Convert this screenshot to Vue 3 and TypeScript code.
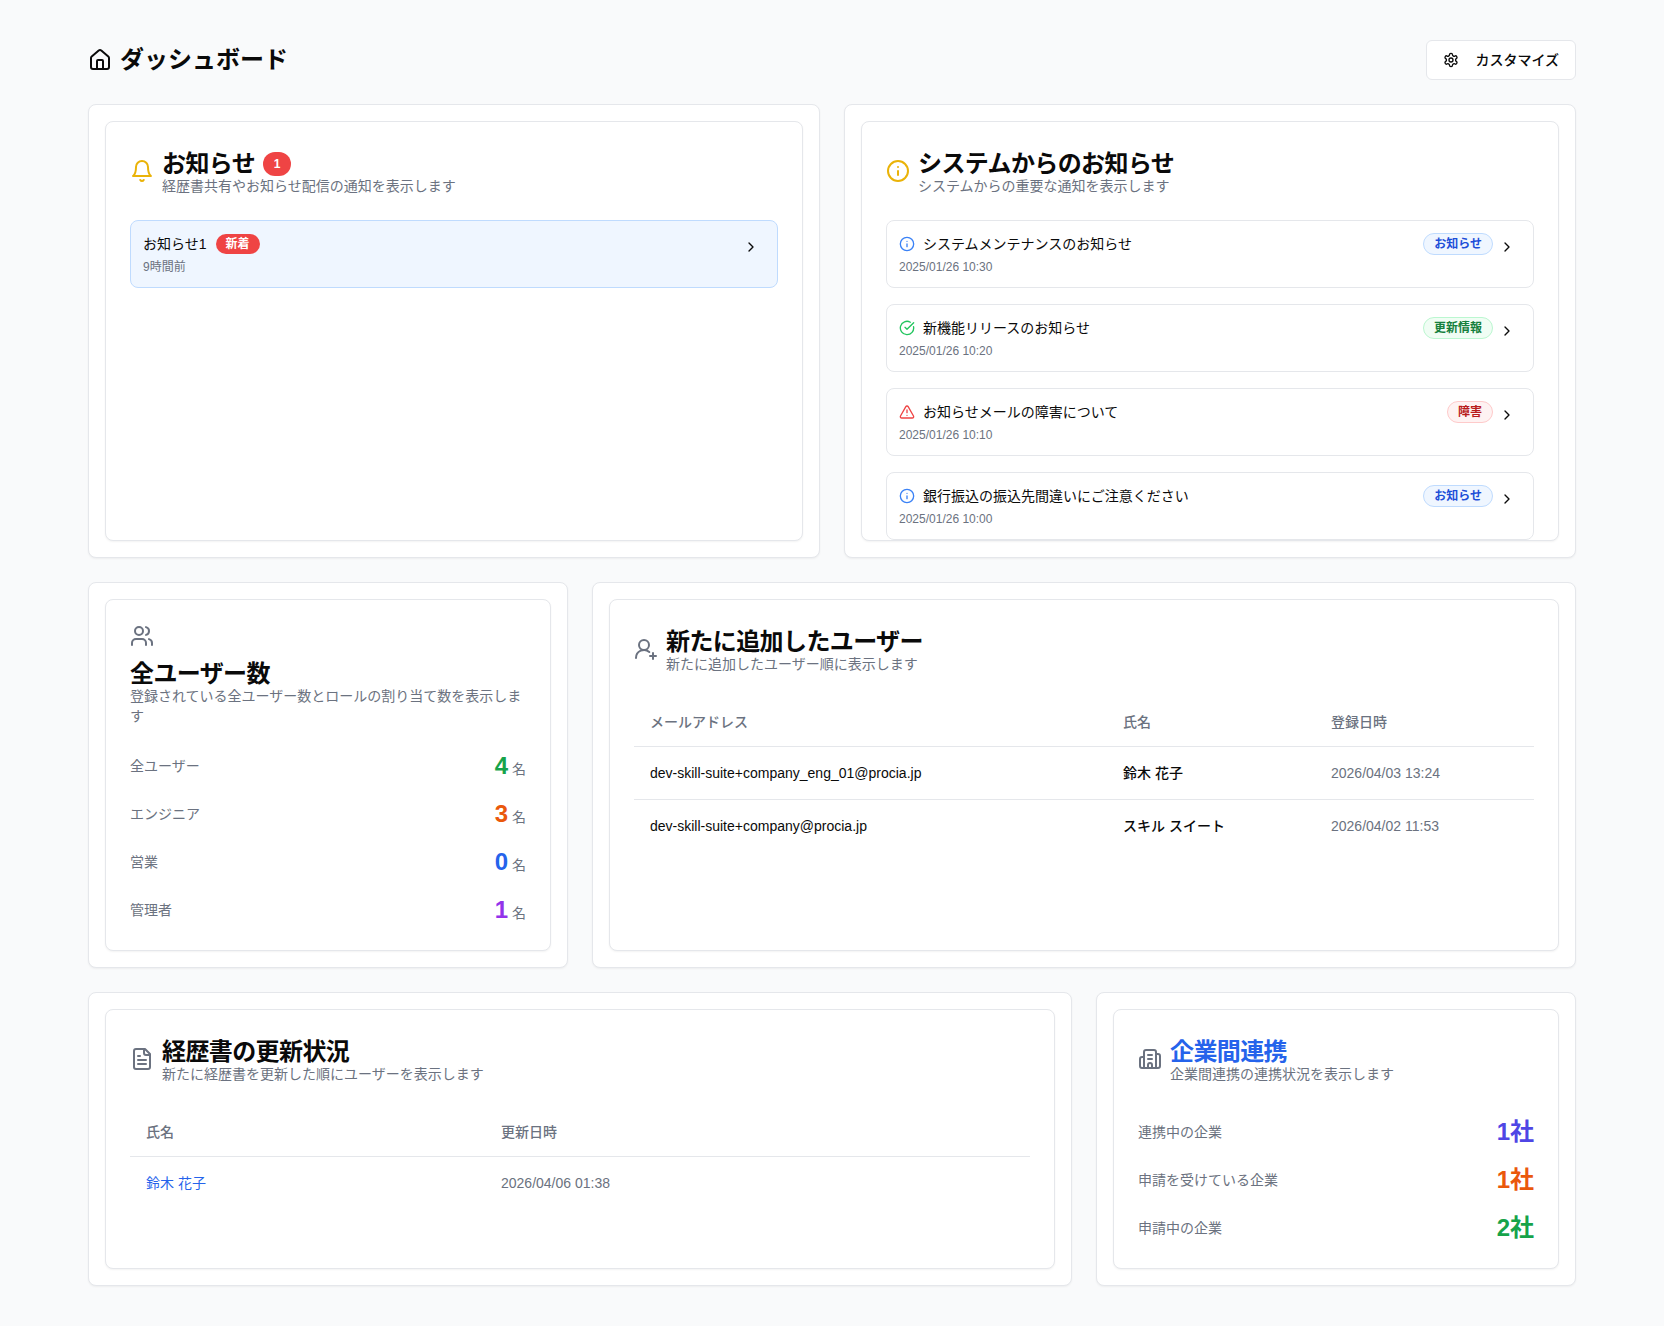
<template>
  <div class="page">
    <header class="top">
      <h1 class="page-title">
        <svg class="ic24" viewBox="0 0 24 24"><path d="M15 21v-8a1 1 0 0 0-1-1h-4a1 1 0 0 0-1 1v8" /><path d="M3 10a2 2 0 0 1 .709-1.528l7-5.999a2 2 0 0 1 2.582 0l7 5.999A2 2 0 0 1 21 10v9a2 2 0 0 1-2 2H5a2 2 0 0 1-2-2z" /></svg>
        ダッシュボード
      </h1>
      <button class="custom-btn">
        <svg class="ic16" viewBox="0 0 24 24"><path d="M12.22 2h-.44a2 2 0 0 0-2 2v.18a2 2 0 0 1-1 1.73l-.43.25a2 2 0 0 1-2 0l-.15-.08a2 2 0 0 0-2.73.73l-.22.38a2 2 0 0 0 .73 2.73l.15.1a2 2 0 0 1 1 1.72v.51a2 2 0 0 1-1 1.74l-.15.09a2 2 0 0 0-.73 2.73l.22.38a2 2 0 0 0 2.73.73l.15-.08a2 2 0 0 1 2 0l.43.25a2 2 0 0 1 1 1.73V20a2 2 0 0 0 2 2h.44a2 2 0 0 0 2-2v-.18a2 2 0 0 1 1-1.73l.43-.25a2 2 0 0 1 2 0l.15.08a2 2 0 0 0 2.73-.73l.22-.39a2 2 0 0 0-.73-2.73l-.15-.08a2 2 0 0 1-1-1.74v-.5a2 2 0 0 1 1-1.74l.15-.09a2 2 0 0 0 .73-2.73l-.22-.38a2 2 0 0 0-2.73-.73l-.15.08a2 2 0 0 1-2 0l-.43-.25a2 2 0 0 1-1-1.73V4a2 2 0 0 0-2-2z" /><circle cx="12" cy="12" r="3" /></svg>
        カスタマイズ
      </button>
    </header>

    <section class="row row-1">
      <div class="outer">
        <div class="inner fixed">
          <div class="card-head">
            <svg class="ic24 amber" viewBox="0 0 24 24"><path d="M6 8a6 6 0 0 1 12 0c0 7 3 9 3 9H3s3-2 3-9" /><path d="M10.3 21a1.94 1.94 0 0 0 3.4 0" /></svg>
            <div>
              <h2 class="card-title">お知らせ <span class="count">1</span></h2>
              <p class="card-desc">経歴書共有やお知らせ配信の通知を表示します</p>
            </div>
          </div>
          <div class="item unread">
            <div class="item-main">
              <div class="item-line">
                <span class="item-title">お知らせ1</span>
                <span class="new-badge">新着</span>
              </div>
              <p class="item-time">9時間前</p>
            </div>
            <svg class="ic16 chev" viewBox="0 0 24 24"><path d="m9 18 6-6-6-6" /></svg>
          </div>
        </div>
      </div>

      <div class="outer">
        <div class="inner fixed">
          <div class="card-head">
            <svg class="ic24 amber" viewBox="0 0 24 24"><circle cx="12" cy="12" r="10" /><path d="M12 16v-4" /><path d="M12 8h.01" /></svg>
            <div>
              <h2 class="card-title">システムからのお知らせ</h2>
              <p class="card-desc">システムからの重要な通知を表示します</p>
            </div>
          </div>
          <div class="list">
            <div v-for="n in notices" :key="n.title" class="item">
              <div class="item-main">
                <div class="item-line">
                  <svg class="ic16" :class="n.kind" viewBox="0 0 24 24">
                    <template v-if="n.kind === 'info'"><circle cx="12" cy="12" r="10" /><path d="M12 16v-4" /><path d="M12 8h.01" /></template>
                    <template v-else-if="n.kind === 'ok'"><path d="M21.801 10A10 10 0 1 1 17 3.335" /><path d="m9 11 3 3L22 4" /></template>
                    <template v-else><path d="m21.73 18-8-14a2 2 0 0 0-3.48 0l-8 14A2 2 0 0 0 4 21h16a2 2 0 0 0 1.73-3" /><path d="M12 9v4" /><path d="M12 17h.01" /></template>
                  </svg>
                  <span class="item-title">{{ n.title }}</span>
                </div>
                <p class="item-time">{{ n.date }}</p>
              </div>
              <span class="chip" :class="n.kind">{{ n.label }}</span>
              <svg class="ic16 chev" viewBox="0 0 24 24"><path d="m9 18 6-6-6-6" /></svg>
            </div>
          </div>
        </div>
      </div>
    </section>

    <section class="row row-2">
      <div class="outer">
        <div class="inner">
          <svg class="ic24 grey" viewBox="0 0 24 24"><path d="M16 21v-2a4 4 0 0 0-4-4H6a4 4 0 0 0-4 4v2" /><circle cx="9" cy="7" r="4" /><path d="M22 21v-2a4 4 0 0 0-3-3.87" /><path d="M16 3.13a4 4 0 0 1 0 7.75" /></svg>
          <h2 class="card-title users-title">全ユーザー数</h2>
          <p class="card-desc">登録されている全ユーザー数とロールの割り当て数を表示します</p>
          <div class="stats users-stats">
            <div v-for="s in userStats" :key="s.label" class="stat">
              <span class="stat-label">{{ s.label }}</span>
              <span class="stat-val"><b :style="{ color: s.color }">{{ s.value }}</b><i>名</i></span>
            </div>
          </div>
        </div>
      </div>

      <div class="outer">
        <div class="inner">
          <div class="card-head">
            <svg class="ic24 grey" viewBox="0 0 24 24"><path d="M2 21a8 8 0 0 1 13.292-6" /><circle cx="10" cy="8" r="5" /><path d="M19 16v6" /><path d="M22 19h-6" /></svg>
            <div>
              <h2 class="card-title">新たに追加したユーザー</h2>
              <p class="card-desc">新たに追加したユーザー順に表示します</p>
            </div>
          </div>
          <table class="tbl">
            <colgroup><col style="width: 473px" /><col style="width: 208px" /><col /></colgroup>
            <thead><tr><th>メールアドレス</th><th>氏名</th><th>登録日時</th></tr></thead>
            <tbody>
              <tr v-for="u in newUsers" :key="u.mail">
                <td>{{ u.mail }}</td>
                <td class="strong">{{ u.name }}</td>
                <td class="muted">{{ u.date }}</td>
              </tr>
            </tbody>
          </table>
        </div>
      </div>
    </section>

    <section class="row row-3">
      <div class="outer">
        <div class="inner">
          <div class="card-head">
            <svg class="ic24 grey" viewBox="0 0 24 24"><path d="M15 2H6a2 2 0 0 0-2 2v16a2 2 0 0 0 2 2h12a2 2 0 0 0 2-2V7Z" /><path d="M14 2v4a2 2 0 0 0 2 2h4" /><path d="M10 9H8" /><path d="M16 13H8" /><path d="M16 17H8" /></svg>
            <div>
              <h2 class="card-title">経歴書の更新状況</h2>
              <p class="card-desc">新たに経歴書を更新した順にユーザーを表示します</p>
            </div>
          </div>
          <table class="tbl">
            <colgroup><col style="width: 355px" /><col /></colgroup>
            <thead><tr><th>氏名</th><th>更新日時</th></tr></thead>
            <tbody>
              <tr><td class="link">鈴木 花子</td><td class="muted">2026/04/06 01:38</td></tr>
            </tbody>
          </table>
        </div>
      </div>

      <div class="outer">
        <div class="inner">
          <div class="card-head">
            <svg class="ic24 grey" viewBox="0 0 24 24"><path d="M10 12h4" /><path d="M10 8h4" /><path d="M14 21v-3a2 2 0 0 0-4 0v3" /><path d="M6 10H4a2 2 0 0 0-2 2v7a2 2 0 0 0 2 2h16a2 2 0 0 0 2-2V9a2 2 0 0 0-2-2h-2" /><path d="M6 21V5a2 2 0 0 1 2-2h8a2 2 0 0 1 2 2v16" /></svg>
            <div>
              <h2 class="card-title blue">企業間連携</h2>
              <p class="card-desc">企業間連携の連携状況を表示します</p>
            </div>
          </div>
          <div class="stats company-stats">
            <div v-for="s in companyStats" :key="s.label" class="stat">
              <span class="stat-label">{{ s.label }}</span>
              <span class="stat-val"><b :style="{ color: s.color }">{{ s.value }}</b></span>
            </div>
          </div>
        </div>
      </div>
    </section>
  </div>
</template>

<script setup lang="ts">
interface Notice {
  title: string;
  date: string;
  kind: 'info' | 'ok' | 'bad';
  label: string;
}

interface Stat {
  label: string;
  value: string;
  color: string;
}

const notices: Notice[] = [
  { title: 'システムメンテナンスのお知らせ', date: '2025/01/26 10:30', kind: 'info', label: 'お知らせ' },
  { title: '新機能リリースのお知らせ', date: '2025/01/26 10:20', kind: 'ok', label: '更新情報' },
  { title: 'お知らせメールの障害について', date: '2025/01/26 10:10', kind: 'bad', label: '障害' },
  { title: '銀行振込の振込先間違いにご注意ください', date: '2025/01/26 10:00', kind: 'info', label: 'お知らせ' },
];

const userStats: Stat[] = [
  { label: '全ユーザー', value: '4', color: '#16a34a' },
  { label: 'エンジニア', value: '3', color: '#ea580c' },
  { label: '営業', value: '0', color: '#2563eb' },
  { label: '管理者', value: '1', color: '#9333ea' },
];

const companyStats: Stat[] = [
  { label: '連携中の企業', value: '1社', color: '#4f46e5' },
  { label: '申請を受けている企業', value: '1社', color: '#ea580c' },
  { label: '申請中の企業', value: '2社', color: '#16a34a' },
];

const newUsers = [
  { mail: 'dev-skill-suite+company_eng_01@procia.jp', name: '鈴木 花子', date: '2026/04/03 13:24' },
  { mail: 'dev-skill-suite+company@procia.jp', name: 'スキル スイート', date: '2026/04/02 11:53' },
];
</script>

<style>
body {
  background: #f9fafb;
}
</style>

<style scoped>
.page {
  box-sizing: border-box;
  min-height: 1326px;
  padding: 40px 88px;
  font-family: "Liberation Sans", "Noto Sans CJK JP", sans-serif;
  color: #0a0a0a;
  font-size: 14px;
  line-height: 20px;
}

.top {
  display: flex;
  justify-content: space-between;
  align-items: center;
  margin-bottom: 24px;
}

.page-title {
  display: flex;
  align-items: center;
  gap: 8px;
  margin: 0;
  font-size: 24px;
  line-height: 32px;
  font-weight: 700;
}

.custom-btn {
  display: flex;
  align-items: center;
  gap: 16px;
  height: 40px;
  padding: 0 16px;
  background: #fff;
  border: 1px solid #e5e7eb;
  border-radius: 6px;
  font: inherit;
  font-weight: 500;
  color: inherit;
}

svg {
  fill: none;
  stroke: currentColor;
  stroke-width: 2;
  stroke-linecap: round;
  stroke-linejoin: round;
  flex-shrink: 0;
  display: block;
}

.ic24 {
  width: 24px;
  height: 24px;
}

.ic16 {
  width: 16px;
  height: 16px;
}

.amber {
  color: #eab308;
}

.grey {
  color: #6b7280;
}

.row {
  display: grid;
  gap: 24px;
  margin-bottom: 24px;
}

.row-1 {
  grid-template-columns: 1fr 1fr;
}

.row-2 {
  grid-template-columns: 480px 1fr;
}

.row-3 {
  grid-template-columns: 1fr 480px;
  margin-bottom: 0;
}

.outer {
  background: #fff;
  border: 1px solid #e5e7eb;
  border-radius: 8px;
  padding: 16px;
  box-shadow: 0 1px 2px rgba(0, 0, 0, 0.05);
  min-width: 0;
}

.inner {
  box-sizing: border-box;
  height: 100%;
  background: #fff;
  border: 1px solid #e5e7eb;
  border-radius: 8px;
  padding: 24px;
  box-shadow: 0 1px 2px rgba(0, 0, 0, 0.05);
}

.fixed {
  height: 420px;
  overflow: hidden;
}

.card-head {
  display: flex;
  align-items: center;
  gap: 8px;
  margin-bottom: 24px;
}

.card-title {
  display: flex;
  align-items: center;
  gap: 8px;
  margin: 0;
  padding-top: 6px;
  font-size: 24px;
  line-height: 24px;
  font-weight: 700;
  letter-spacing: -0.6px;
}

.card-desc {
  margin: 0;
  color: #6b7280;
}

.users-title {
  padding-top: 14px;
}

.blue {
  color: #2563eb;
}

.count {
  display: inline-flex;
  align-items: center;
  justify-content: center;
  width: 28px;
  height: 24px;
  border-radius: 12px;
  background: #ef4444;
  color: #fff;
  font-size: 12px;
  line-height: 16px;
  letter-spacing: 0;
}

.list {
  display: flex;
  flex-direction: column;
  gap: 16px;
}

.item {
  display: flex;
  align-items: flex-start;
  gap: 6px;
  padding: 12px 18px 12px 12px;
  border: 1px solid #e5e7eb;
  border-radius: 8px;
  background: #fff;
}

.item.unread {
  background: #eff6ff;
  border-color: #bfdbfe;
}

.item-main {
  flex: 1;
  min-width: 0;
}

.item-line {
  display: flex;
  align-items: center;
  gap: 8px;
  height: 22px;
}

.item-time {
  margin: 4px 0 0;
  font-size: 12px;
  line-height: 16px;
  color: #6b7280;
}

.new-badge {
  margin-left: 1px;
  padding: 2px 10px;
  border-radius: 11px;
  background: #ef4444;
  color: #fff;
  font-size: 12px;
  line-height: 16px;
  font-weight: 700;
}

.chip {
  padding: 2px 10px;
  border: 1px solid;
  border-radius: 11px;
  font-size: 12px;
  line-height: 16px;
  font-weight: 700;
}

.chip.info {
  background: #eff6ff;
  border-color: #bfdbfe;
  color: #1d4ed8;
}

.chip.ok {
  background: #f0fdf4;
  border-color: #bbf7d0;
  color: #15803d;
}

.chip.bad {
  background: #fef2f2;
  border-color: #fecaca;
  color: #b91c1c;
}

svg.info {
  color: #3b82f6;
}

svg.ok {
  color: #22c55e;
}

svg.bad {
  color: #ef4444;
}

.chev {
  margin-top: 6px;
  color: #0a0a0a;
}

.stats {
  display: flex;
  flex-direction: column;
  gap: 16px;
}

.users-stats {
  margin-top: 24px;
}

.company-stats {
  margin-top: 32px;
}

.stat {
  display: flex;
  justify-content: space-between;
  align-items: center;
  height: 32px;
}

.stat-label {
  color: #6b7280;
}

.stat-val {
  display: flex;
  align-items: baseline;
  gap: 4px;
}

.stat-val b {
  font-size: 24px;
  line-height: 32px;
}

.stat-val i {
  font-style: normal;
  color: #6b7280;
}

.tbl {
  width: 100%;
  border-collapse: collapse;
  table-layout: fixed;
}

.tbl th {
  height: 48px;
  padding: 0 16px;
  text-align: left;
  font-weight: 500;
  color: #6b7280;
  border-bottom: 1px solid #e5e7eb;
}

.tbl td {
  height: 52px;
  padding: 0 16px;
  border-bottom: 1px solid #e5e7eb;
}

.tbl tr:last-child td {
  border-bottom: 0;
}

.strong {
  font-weight: 500;
}

.muted {
  color: #6b7280;
}

.link {
  color: #2563eb;
}
</style>
